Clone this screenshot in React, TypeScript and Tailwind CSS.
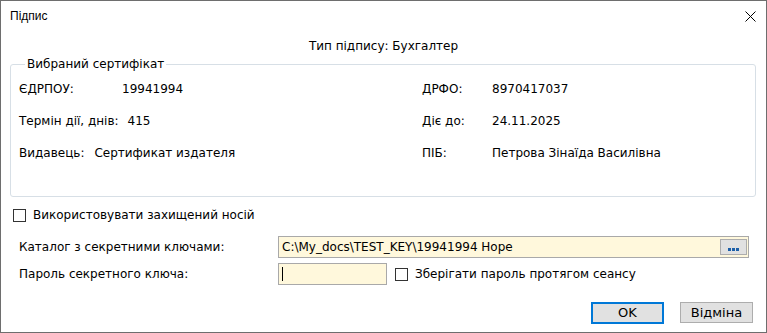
const font = { fontFamily: '"DejaVu Sans", Verdana, sans-serif' };

const Checkbox = () => (
  <span className="inline-block w-[13px] h-[13px] border border-[#333333] bg-white shrink-0" />
);

const App = () => {
  return (
    <div
      style={font}
      className="w-[767px] h-[333px] bg-white border border-[#6e6e6e] text-[12px] text-black flex flex-col overflow-hidden"
    >
      <div className="h-[30px] flex items-center justify-between pl-[9px] pr-[10px]">
        <span className="text-[12px] font-['Liberation_Sans',Arial,sans-serif]">Підпис</span>
        <svg width="11" height="11" viewBox="0 0 11 11">
          <path d="M0.5 0.5 L10.5 10.5 M10.5 0.5 L0.5 10.5" stroke="#000" strokeWidth="1" />
        </svg>
      </div>

      <div className="h-[20px] mt-[5px] flex items-center justify-center">Тип підпису: Бухгалтер</div>

      <fieldset className="ml-[9px] mr-[10px] border border-[#d7dfe6] rounded-[3px] pl-[8px] pb-[27px]">
        <legend className="px-[2px] ml-[6px] leading-[16px]">Вибраний сертифікат</legend>
        <div className="grid grid-cols-[403px_1fr] grid-rows-[32px_32px_32px] pt-[1px]">
          <div className="flex items-center">
            <span className="w-[103px]">ЄДРПОУ:</span>
            <span>19941994</span>
          </div>
          <div className="flex items-center">
            <span className="w-[70px]">ДРФО:</span>
            <span>8970417037</span>
          </div>
          <div className="flex items-center">
            <span>Термін дії, днів:</span>
            <span className="ml-[9px]">415</span>
          </div>
          <div className="flex items-center">
            <span className="w-[70px]">Діє до:</span>
            <span>24.11.2025</span>
          </div>
          <div className="flex items-center">
            <span>Видавець:</span>
            <span className="ml-[10px]">Сертификат издателя</span>
          </div>
          <div className="flex items-center">
            <span className="w-[70px]">ПІБ:</span>
            <span>Петрова Зінаїда Василівна</span>
          </div>
        </div>
      </fieldset>

      <div className="mt-[10px] h-[16px] flex items-center pl-[12px] gap-[7px]">
        <Checkbox />
        <span>Використовувати захищений носій</span>
      </div>

      <div className="mt-[13px] flex items-center pl-[18px]">
        <span className="w-[259px]">Каталог з секретними ключами:</span>
        <div className="w-[471px] h-[22px] border border-[#a9a9a9] bg-[#fff8dc] flex items-center justify-between pl-[3px] pr-[1px]">
          <span>C:\My_docs\TEST_KEY\19941994 Hope</span>
          <button className="w-[27px] h-[16px] bg-[#e1e1e1] border border-[#adadad] flex items-end justify-center pb-[3px] gap-[1px]">
            <span className="w-[3px] h-[3px] bg-[#1c5fa8]" />
            <span className="w-[3px] h-[3px] bg-[#1c5fa8]" />
            <span className="w-[3px] h-[3px] bg-[#1c5fa8]" />
          </button>
        </div>
      </div>

      <div className="mt-[5px] flex items-center pl-[18px]">
        <span className="w-[259px]">Пароль секретного ключа:</span>
        <div className="w-[109px] h-[22px] border border-[#a9a9a9] bg-[#fff8dc] flex items-center pl-[3px]">
          <span className="w-[1px] h-[14px] bg-black" />
        </div>
        <div className="ml-[8px] flex items-center gap-[7px]">
          <Checkbox />
          <span>Зберігати пароль протягом сеансу</span>
        </div>
      </div>

      <div className="mt-[17px] flex justify-end items-start pr-[13px] gap-[16px]">
        <button className="w-[73px] h-[22px] bg-[#e1e1e1] border-2 border-[#0078d7] flex items-center justify-center text-[13px]">
          OK
        </button>
        <button className="w-[73px] h-[21px] bg-[#e1e1e1] border border-[#adadad] flex items-center justify-center text-[13px]">
          Відміна
        </button>
      </div>
    </div>
  );
};

export default App;
